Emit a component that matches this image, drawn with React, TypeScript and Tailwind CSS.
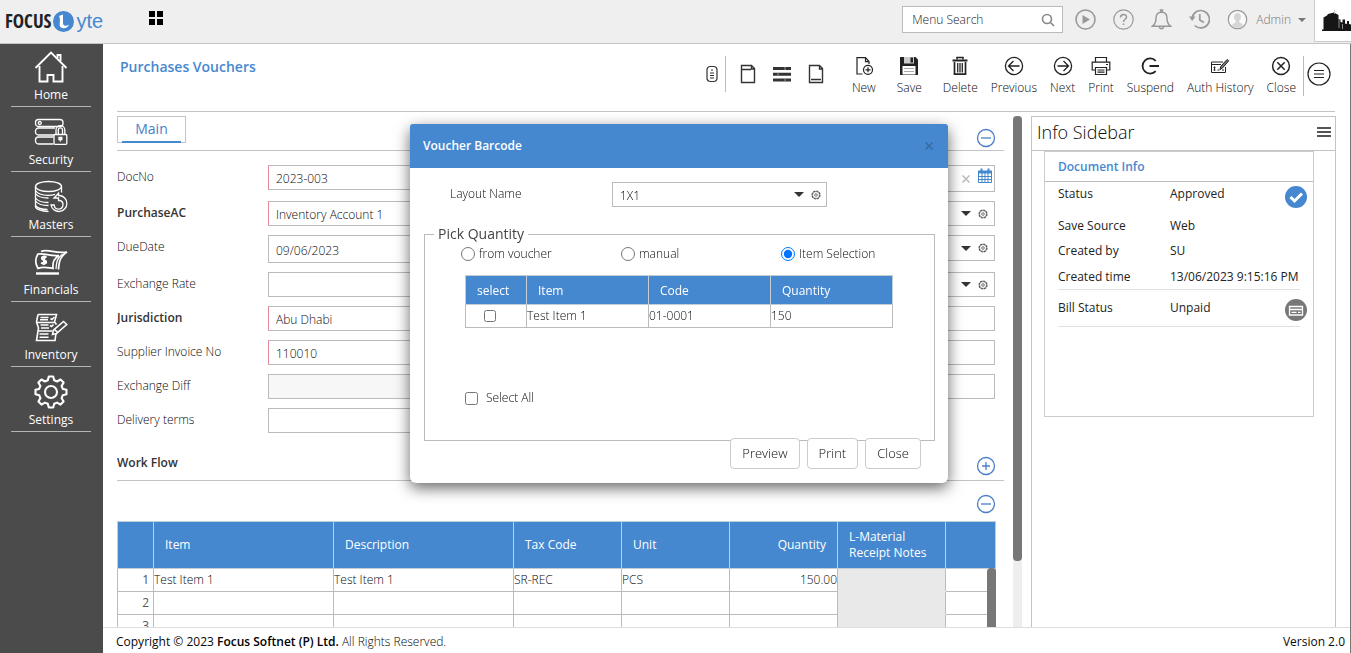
import React, { useState } from 'react';

type IconProps = { className?: string };

const HomeIcon = () => (
  <svg className="h-[34px] w-[34px]" viewBox="0 0 34 34" fill="none" stroke="currentColor" strokeWidth="1.900">
    <path d="M1.500 18 17 2.500 32.500 18" />
    <path d="M5.500 16v15.500h8V25h6v6.500h9V16M23.500 8V5h3v6" />
  </svg>
);

const SecurityIcon = () => (
  <svg className="h-[34px] w-[34px]" viewBox="0 0 34 34" fill="none" stroke="currentColor" strokeWidth="1.300">
    <rect x="1.500" y="4.500" width="27.500" height="7" rx="3" />
    <path d="M20 20H4.500a3 3 0 0 1-3-3v-1a3 3 0 0 1 3-3H21M19.500 29H4.500a3 3 0 0 1-3-3v-1a3 3 0 0 1 3-3h15" />
    <circle cx="5.800" cy="8" r="1.500" />
    <rect x="20" y="19.500" width="12.800" height="9.800" rx="1" />
    <path d="M22 19v-4a4.400 4.400 0 0 1 8.800 0v4M24.300 19v-4a2.100 2.100 0 0 1 4.200 0v4" />
    <path d="M26.400 22.500v4M25 22.500h2.800v2H25z" />
  </svg>
);

const MastersIcon = () => (
  <svg className="h-[34px] w-[34px]" viewBox="0 0 34 34" fill="none" stroke="currentColor" strokeWidth="1.300">
    <ellipse cx="14.500" cy="6.500" rx="13" ry="5" />
    <path d="M1.500 6.500v20c0 2.600 6 5 13 5M27.500 6.500v6" />
    <path d="M1.500 10.500c2 3.400 6.500 4.800 12.500 4.800 3 0 5-.3 7-1M1.500 13.500c2 3.400 6 4.500 13 4.500M1.500 18c2 3 7 4.500 13 4.500M1.500 21c2 3 7 4.500 13 4.500M1.500 25.500c2 2.800 6 4 12 4" />
    <path d="M20 18h4.500v2.500h1.300a4.400 4.400 0 1 1-5.600 4.500H17a8 8 0 1 0 8.500-9.500h-1v-2.300z" />
  </svg>
);

const FinancialsIcon = () => (
  <svg className="h-[34px] w-[34px]" viewBox="0 0 34 34" fill="none" stroke="currentColor" strokeWidth="1.700">
    <path d="M7 6.500c7-3 14 2.500 26 .5-6 4-8 8-8.500 17.500" />
    <path d="M4 9c7-1 12 2.500 21 1.500-5 3-6.500 6-6 13-6-1-10-2.500-15 0C1 18.500 1 13.500 4 9z" />
    <path d="M29 9c-6 3.500-6.500 8-7 15" strokeWidth="1.300" />
    <path d="M2 28.500h23" strokeWidth="2.400" />
    <path d="M12.500 12.500c-2-1.700-5-.5-4.500 1.200.6 2 4.200 1 4.200 3.300 0 1.800-3.500 2.200-5 .5M10.500 10.500l-.8 9.500" strokeWidth="2" />
  </svg>
);

const InventoryIcon = () => (
  <svg className="h-[34px] w-[34px]" viewBox="0 0 34 34" fill="none" stroke="currentColor" strokeWidth="1.600">
    <path d="M4 4.500h18.500l-2 7.500 2 2.500M4 4.500 2.500 12l2 6-2 12.500H21l1-7.500" />
    <path d="M2.500 12.500h17.500M4.500 21h14" />
    <path d="M6.500 7.500h8M6 9.800h8M6.500 15h8M7 18h8M5.500 24h9M5.500 27.200h9" strokeWidth="1.400" />
    <path d="m16.500 8.500 1.500 1 2.500-2.500M16 15.500l1.500 1 2-2" />
    <path d="m18.500 24.500.9-4.300L29.500 11.500l3.200 3-10.200 9zM20.500 19.500l2.800 2.700" />
  </svg>
);

const SettingsIcon = () => (
  <svg className="h-[34px] w-[34px]" viewBox="0 0 34 34" fill="none" stroke="currentColor" strokeWidth="2.100" strokeLinejoin="round">
    <circle cx="17" cy="17" r="6" />
    <path d="M14.800 1.500h4.400l1 3.800 2.900 1.200 3.400-2 3.100 3.100-2 3.400 1.200 2.900 3.700.9v4.400l-3.700 1-1.200 2.900 2 3.400-3.100 3.100-3.400-2-2.900 1.200-1 3.700h-4.400l-1-3.700-2.900-1.200-3.400 2-3.100-3.100 2-3.400-1.200-2.900-3.700-1v-4.400l3.700-.9L6.400 11l-2-3.400 3.100-3.100 3.400 2 2.900-1.200z" />
  </svg>
);

const GearIcon = () => (
  <svg className="h-[10px] w-[10px]" viewBox="0 0 10 10" fill="none" stroke="#555">
    <circle cx="5" cy="5" r="4" strokeWidth="1.200" strokeDasharray="2.200 .9" />
    <circle cx="5" cy="5" r="3.500" strokeWidth=".6" />
    <circle cx="5" cy="5" r="1.300" strokeWidth=".8" />
  </svg>
);

const Caret = ({ className = '' }: IconProps) => (
  <svg className={className || 'h-[5px] w-[10px]'} viewBox="0 0 10 5">
    <path d="M0 0h10L5 5z" fill="currentColor" />
  </svg>
);

const CircleIcon = ({ plus = false }: { plus?: boolean }) => (
  <svg className="h-5 w-5" viewBox="0 0 20 20" fill="none" stroke="#4a7fc8" strokeWidth="1.300">
    <circle cx="10" cy="10" r="8.500" />
    {plus ? <path d="M6 10h8M10 6v8" /> : <path d="M5 10h10" />}
  </svg>
);

const NewIcon = () => (
  <svg className="h-5 w-5" viewBox="0 0 20 20" fill="none" stroke="currentColor" strokeWidth="1.200">
    <path d="M8.500 18H3V1.700h8.500L15 5.500V8M11.500 1.700v4H15" />
    <circle cx="14" cy="13.800" r="4.500" />
    <path d="M11.500 13.800h5M14 11.300v5" />
  </svg>
);

const SaveIcon = () => (
  <svg className="h-5 w-5" viewBox="0 0 20 20">
    <path d="M1 1h15.500L19 3.500V19H1z" fill="currentColor" />
    <path d="M5 1h10v6.500H5z" fill="#ccc" />
    <path d="M11.500 1.500H14v5h-2.500z" fill="currentColor" />
    <path d="M3.500 10h13v8.500h-13z" fill="#fff" />
    <path d="M5 12.500h10M5 15.500h10" stroke="#aaa" />
  </svg>
);

const TrashIcon = () => (
  <svg className="h-5 w-5" viewBox="0 0 20 20" fill="none" stroke="currentColor">
    <path d="M2.500 4.500h15" strokeWidth="2" />
    <path d="M7 3.500V1.600h6v1.900" strokeWidth="1.500" />
    <path d="M4.500 6v12.200h11V6" strokeWidth="1.700" />
    <path d="M7.700 7v9.500M10 7v9.500M12.300 7v9.500" strokeWidth="1.300" />
  </svg>
);

const PreviousIcon = () => (
  <svg className="h-5 w-5" viewBox="0 0 20 20" fill="none" stroke="currentColor" strokeWidth="1.300">
    <circle cx="10" cy="10" r="8.600" />
    <path d="M15.500 10h-11M9.500 5 4.500 10l5 5" />
  </svg>
);

const NextIcon = () => (
  <svg className="h-5 w-5" viewBox="0 0 20 20" fill="none" stroke="currentColor" strokeWidth="1.300">
    <circle cx="10" cy="10" r="8.600" />
    <path d="M4.500 10h11M10.500 5l5 5-5 5" />
  </svg>
);

const PrintIcon = () => (
  <svg className="h-5 w-5" viewBox="0 0 20 20" fill="none" stroke="currentColor" strokeWidth="1.200">
    <path d="M4.500 6V1.500h11V6M4.500 14H1.200V6.200h17.600V14h-3.300" />
    <path d="M4.500 11.500h11v7h-11zM6.500 14h7M6.500 16.200h7M15 8.500h2" />
  </svg>
);

const SuspendIcon = () => (
  <svg className="h-5 w-5" viewBox="0 0 20 20" fill="none" stroke="currentColor" strokeWidth="1.800">
    <path d="M15.700 4.800a7.600 7.600 0 1 0 0 10.400M9.500 10H19" />
  </svg>
);

const AuthIcon = () => (
  <svg className="h-5 w-5" viewBox="0 0 20 20" fill="none" stroke="currentColor" strokeWidth="1">
    <path d="M13 6H1.500v10.500h14V11M1.500 8.500H11" />
    <path d="M4.500 10.500v4M3.500 11.500h2M3.500 14h2M7.500 14h2M12 14h2" />
    <path d="m10 13.500.7-3 6.300-7 1.700 1.300-6.200 7.200z" fill="#777" />
  </svg>
);

const CloseIcon = () => (
  <svg className="h-5 w-5" viewBox="0 0 20 20" fill="none" stroke="currentColor" strokeWidth="1.500">
    <circle cx="10" cy="10" r="8.400" />
    <path d="m6.300 6.300 7.400 7.400M13.700 6.300l-7.400 7.400" />
  </svg>
);

const CrossIcon = ({ className = '' }: IconProps) => (
  <svg className={`h-2 w-2 ${className}`} viewBox="0 0 8 8" stroke="currentColor" strokeWidth="1.500">
    <path d="m.5.500 7 7M7.500.500l-7 7" />
  </svg>
);

const CalendarIcon = () => (
  <svg className="h-4 w-[14px]" viewBox="0 0 14 16">
    <path d="M.5 3.500h13v11H.5z" fill="#fff" stroke="#4688cf" />
    <path d="M0 2.500h14v3H0z" fill="#4688cf" />
    <path d="M3.500.500V4M10.500.500V4" stroke="#4688cf" strokeWidth="2" />
    <path d="M4 5v9.500M7 5v9.500M10 5v9.500M.5 8.500h13M.5 11.500h13" stroke="#4688cf" />
  </svg>
);

const menuItems = [
  { label: 'Home', icon: HomeIcon },
  { label: 'Security', icon: SecurityIcon },
  { label: 'Masters', icon: MastersIcon },
  { label: 'Financials', icon: FinancialsIcon },
  { label: 'Inventory', icon: InventoryIcon },
  { label: 'Settings', icon: SettingsIcon }
];

const actions = [
  { label: 'New', icon: NewIcon, gap: 'mr-[21px]' },
  { label: 'Save', icon: SaveIcon, gap: 'mr-[21px]' },
  { label: 'Delete', icon: TrashIcon, gap: 'mr-[13px]' },
  { label: 'Previous', icon: PreviousIcon, gap: 'mr-[13px]' },
  { label: 'Next', icon: NextIcon, gap: 'mr-[13px]' },
  { label: 'Print', icon: PrintIcon, gap: 'mr-[13px]' },
  { label: 'Suspend', icon: SuspendIcon, gap: 'mr-[13px]' },
  { label: 'Auth History', icon: AuthIcon, gap: 'mr-[13px]' },
  { label: 'Close', icon: CloseIcon, gap: 'mr-[7px]' }
];

const fields = [
  { id: 'docNo', label: 'DocNo', value: '2023-003', row: 'h-[27px]', box: 'h-[25px] border-l-[#e58a9a]' },
  { id: 'purchaseAc', label: 'PurchaseAC', value: 'Inventory Account 1', bold: true, row: 'h-[25px]', box: 'h-[25px] border-l-[#e58a9a]' },
  { id: 'dueDate', label: 'DueDate', value: '09/06/2023', row: 'h-[28px]', box: 'h-[28px]' },
  { id: 'exchangeRate', label: 'Exchange Rate', value: '', row: 'h-[25px]', box: 'h-[25px]' },
  { id: 'jurisdiction', label: 'Jurisdiction', value: 'Abu Dhabi', bold: true, row: 'h-[25px]', box: 'h-[25px] border-l-[#e58a9a]' },
  { id: 'supplierInvoice', label: 'Supplier Invoice No', value: '110010', row: 'h-[25px]', box: 'h-[25px] border-l-[#e58a9a]' },
  { id: 'exchangeDiff', label: 'Exchange Diff', value: '', row: 'h-[25px]', box: 'h-[25px] bg-[#f7f7f7]' },
  { id: 'deliveryTerms', label: 'Delivery terms', value: '', row: 'h-[25px]', box: 'h-[25px]' }
];

const rightFields = [
  { id: 'date', kind: 'date', row: 'h-[27px]', box: 'h-[27px] pr-[2px]' },
  { id: 'currency', kind: 'select', row: 'h-[25px]', box: 'h-[25px] pr-[6px]' },
  { id: 'branch', kind: 'select', row: 'h-[28px]', box: 'h-[26px] pr-[6px]' },
  { id: 'place', kind: 'select', row: 'h-[25px]', box: 'h-[25px] pr-[6px]' },
  { id: 'narration', kind: 'text', row: 'h-[25px]', box: 'h-[25px]' },
  { id: 'reference', kind: 'text', row: 'h-[25px]', box: 'h-[25px]' },
  { id: 'remarks', kind: 'text', row: 'h-[25px]', box: 'h-[25px]' }
];

const rows = [
  { no: 1, item: 'Test Item 1', description: 'Test Item 1', tax: 'SR-REC', unit: 'PCS', quantity: '150.00' },
  { no: 2, item: '', description: '', tax: '', unit: '', quantity: '' },
  { no: 3, item: '', description: '', tax: '', unit: '', quantity: '' }
];

const docInfo = [
  { label: 'Status', value: 'Approved', style: 'h-8 leading-6', badge: 'approved' },
  { label: 'Save Source', value: 'Web', style: 'h-[25px] leading-6' },
  { label: 'Created by', value: 'SU', style: 'h-[26px] leading-6' },
  { label: 'Created time', value: '13/06/2023 9:15:16 PM', style: 'h-[25px] leading-6 border-b border-[#e2e2e2]' },
  { label: 'Bill Status', value: 'Unpaid', style: 'h-[37px] leading-9 border-b border-[#e2e2e2]', badge: 'bill' }
];

const pickOptions = ['from voucher', 'manual', 'Item Selection'];

function Header() {
  return (
    <header className="flex h-11 shrink-0 items-start border-b border-[#c4c4c4] bg-[#efefef]">
      <div className="flex h-[42px] w-[104px] items-center pl-[5px]">
        <span className="font-['Liberation_Sans_Narrow','Open_Sans_Condensed','DejaVu_Sans_Condensed',sans-serif] text-[19px] font-bold text-[#222]">FOCUS</span>
        <svg className="mr-[2px] ml-[2px] h-[21px] w-[21px] shrink-0" viewBox="0 0 21 21">
          <circle cx="10.500" cy="10.500" r="10.500" fill="#4688cf" />
          <path d="M6 5 10 3.500V12c0 3 3 3.500 6 1.500-1 4-6.500 5-9 2C6 13.500 8 8 6 5z" fill="#fff" />
        </svg>
        <span className="font-['Liberation_Sans',sans-serif] text-[20px] leading-5 font-normal text-[#4688cf]">yte</span>
      </div>
      <button aria-label="Dashboard" className="mt-[11px] ml-[45px] grid grid-cols-2 gap-[2px]">
        {[0, 1, 2, 3].map(n => <span key={n} className="h-[6px] w-[6px] bg-black" />)}
      </button>

      <div className="ml-auto flex items-start">
        <div className="mt-[6px] flex h-[27px] w-[161px] items-center border border-[#bbb] bg-white pr-[7px] pl-[9px]">
          <input aria-label="Menu Search" placeholder="Menu Search" className="w-full min-w-0 text-[12px] outline-none placeholder:text-[#222]" />
          <svg className="h-[14px] w-[14px] shrink-0" viewBox="0 0 14 14" fill="none" stroke="#888" strokeWidth="1.600">
            <circle cx="6" cy="6" r="4.500" />
            <path d="m9.500 9.500 3.500 3.500" />
          </svg>
        </div>
        <div className="mt-[9px] ml-3 flex items-center gap-[17px] text-[#999]">
          <svg className="h-[21px] w-[21px]" viewBox="0 0 21 21" fill="none" stroke="currentColor" strokeWidth="1.600">
            <circle cx="10.500" cy="10.500" r="9.500" />
            <path d="M7.500 6v9l7.500-4.500z" fill="currentColor" stroke="none" />
          </svg>
          <svg className="h-[21px] w-[21px]" viewBox="0 0 21 21" fill="none" stroke="currentColor" strokeWidth="1.200">
            <circle cx="10.500" cy="10.500" r="9.700" />
            <path d="M7.500 8.500c0-4 6-4 6-.5 0 2.300-3 2.300-3 5M10.500 14.500v1.500" strokeWidth="1.500" />
          </svg>
          <svg className="h-[21px] w-[21px]" viewBox="0 0 21 21" fill="none" stroke="currentColor" strokeWidth="1.500">
            <path d="M1.500 17.200c2.500-2 3.500-4 3.500-8 0-3.500 2-6 5.500-6s5.500 2.500 5.500 6c0 4 1 6 3.500 8zM8.500 17.500c0 3 4 3 4 0M9.500 3V1h2v2" />
          </svg>
          <svg className="h-[21px] w-[21px]" viewBox="0 0 21 21" fill="none" stroke="currentColor" strokeWidth="1.700">
            <path d="M3.200 8.500a8.700 8.700 0 1 1 2.500 8M10.800 5v6l4 2.500" />
            <path d="M0 7.500h6.500L3.200 12z" fill="currentColor" stroke="none" />
          </svg>
          <svg className="h-[21px] w-[21px]" viewBox="0 0 21 21">
            <circle cx="10.500" cy="10.500" r="9.200" fill="#fafafa" stroke="#999" strokeWidth="1.200" />
            <path d="M10.500 4c4.300 0 4.300 6 1.800 7.800v1.700l3.700 1.700-2 3.300h-7l-2-3.300 3.700-1.700v-1.700C6.200 10 6.200 4 10.500 4z" fill="#d5d5d5" />
          </svg>
        </div>
        <button className="mt-[9px] ml-2 flex items-center gap-[7px] text-[12px] leading-[22px] text-[#777]">
          Admin
          <Caret className="h-1 w-2" />
        </button>
        <div className="ml-2 flex h-[42px] w-[37px] items-center border-b border-l border-[#ccc] bg-white pl-[7px]">
          <svg className="h-[22px] w-[29px]" viewBox="0 0 29 22">
            <path d="M0 21v-1.500h1.500V7.500L5 5.500l1-1.500 6-1.500 4.500 2.500v4l2 .5V12l2 .5v-3h2.500v4l2 .5v-3h2v3l2 .5v5h2V21z" fill="#161616" />
            <path d="M12.500 0v4" stroke="#bbb" strokeWidth=".8" />
            <path d="M17 9v9M20.500 14v5" stroke="#fff" strokeWidth=".5" />
          </svg>
        </div>
      </div>
    </header>
  );
}

function Toolbar() {
  return (
    <div className="mr-[15px] ml-[14px] flex h-[68px] shrink-0 items-start border-b border-[#c4c4c4] text-[#222]">
      <h1 className="mt-[13px] ml-[3px] text-[14px] leading-5 font-semibold text-[#4688cf]">Purchases Vouchers</h1>
      <div className="mt-3 ml-auto flex h-9 items-center text-[#333]">
        <svg className="h-5 w-3" viewBox="0 0 12 20" fill="none" stroke="currentColor" strokeWidth="1.200">
          <rect x="1" y="2.500" width="10" height="15" rx="3.500" />
          <path d="M5 6h2M4 9h4M4 11.500h4M4 14h4" />
        </svg>
        <span className="ml-[7px] h-full w-px bg-[#bbb]" />
        <div className="flex items-center gap-[14px] pl-3">
          <svg className="h-5 w-5" viewBox="0 0 20 20" fill="none" stroke="currentColor" strokeWidth="1.400">
            <path d="M3.500 1.500h10l3 3v14h-13zM3.500 5.500h9.500M13.500 1.500v3.500h3" />
          </svg>
          <svg className="h-5 w-5" viewBox="0 0 20 20" fill="none" stroke="currentColor" strokeWidth="3">
            <path d="M1 4.500h18M1 10.300h18M1 16h18" />
            <path d="M13 3v3M6 8.800v3M13 14.500v3" stroke="#999" strokeWidth="1" />
          </svg>
          <svg className="h-5 w-5" viewBox="0 0 20 20" fill="none" stroke="currentColor" strokeWidth="1.400">
            <path d="M3.500 1.500h10l3 3v14h-13zM5 15.500h10M13.500 1.500v3.500h3" />
          </svg>
        </div>
      </div>
      <div className="mt-3 ml-[26px] flex text-[12px] leading-4">
        {actions.map(({ label, icon: Icon, gap }) => (
          <button key={label} className={`flex flex-col items-center gap-1 ${gap}`}>
            <Icon />
            <span className="text-[#0a0a0a]">{label}</span>
          </button>
        ))}
      </div>
      <div className="mt-3 mr-1 flex h-10 items-start border-l border-[#bbb] pt-[6px] pl-[3px]">
        <button aria-label="More">
          <svg className="h-6 w-6" viewBox="0 0 24 24" fill="none" stroke="currentColor" strokeWidth="1.200">
            <circle cx="12" cy="12" r="11" />
            <path d="M7 8.500h10M7 12h10M7 15.500h10" />
          </svg>
        </button>
      </div>
    </div>
  );
}

function VoucherForm() {
  return (
    <section className="flex min-w-0 flex-1 flex-col overflow-hidden pt-1">
      <div className="flex h-[35px] shrink-0 items-start justify-between border-b border-[#c4c4c4] pr-2">
        <button className="h-[27px] w-[69px] border border-[#c4c4c4] px-1 text-[14px] leading-6 font-normal text-[#4a7fc8]">
          <span className="block border-b-2 border-[#4688cf]">Main</span>
        </button>
        <button aria-label="Collapse" className="mt-3"><CircleIcon /></button>
      </div>

      <div className="mt-[14px] mr-[9px] flex gap-9">
        <div className="flex flex-1 flex-col gap-[9px]">
          {fields.map(f => (
            <div key={f.id} className={`flex items-start ${f.row}`}>
              <label htmlFor={f.id} className={`w-[151px] shrink-0 leading-6 ${f.bold ? 'font-semibold text-[#333]' : ''}`}>{f.label}</label>
              <input id={f.id} defaultValue={f.value} className={`w-full min-w-0 border border-[#bbb] pt-[2px] pl-[7px] outline-none ${f.box}`} />
            </div>
          ))}
        </div>
        <div className="flex flex-1 flex-col gap-[9px]">
          {rightFields.map(f => (
            <div key={f.id} className={`pl-[151px] ${f.row}`}>
              <div className={`flex w-full items-center border border-[#bbb] ${f.box}`}>
                {f.kind === 'select' ? (
                  <select aria-label={f.id} className="h-full min-w-0 flex-1 appearance-none outline-none"><option></option></select>
                ) : (
                  <input aria-label={f.id} className="h-full min-w-0 flex-1 outline-none" />
                )}
                {f.kind === 'select' && (
                  <span className="flex items-center gap-[7px] text-[#333]">
                    <Caret />
                    <GearIcon />
                  </span>
                )}
                {f.kind === 'date' && (
                  <span className="flex h-full gap-2 pt-[2px]">
                    <CrossIcon className="mt-[7px] text-[#bbb]" />
                    <CalendarIcon />
                  </span>
                )}
              </div>
            </div>
          ))}
        </div>
      </div>

      <div className="mt-[18px] flex h-[30px] shrink-0 items-start justify-between border-b border-[#c4c4c4] pr-2">
        <h2 className="leading-6 font-semibold text-[#333]">Work Flow</h2>
        <button aria-label="Expand" className="mt-[5px]"><CircleIcon plus /></button>
      </div>
      <div className="flex h-10 shrink-0 justify-end pt-[13px] pr-2">
        <button aria-label="Collapse items" className="h-5"><CircleIcon /></button>
      </div>

      <div className="relative mr-2">
        <table className="w-full table-fixed border-collapse">
          <colgroup>
            <col className="w-9" />
            <col />
            <col />
            <col className="w-[108px]" />
            <col className="w-[108px]" />
            <col className="w-[108px]" />
            <col className="w-[108px]" />
            <col className="w-[50px]" />
          </colgroup>
          <thead>
            <tr className="h-[47px] bg-[#4688cf] text-left leading-4 text-white [&>th]:border [&>th]:border-[#c4ccd4] [&>th]:px-[11px] [&>th]:font-normal">
              <th></th>
              <th>Item</th>
              <th>Description</th>
              <th>Tax Code</th>
              <th>Unit</th>
              <th className="text-right">Quantity</th>
              <th>L-Material Receipt Notes</th>
              <th></th>
            </tr>
          </thead>
          <tbody>
            {rows.map(r => (
              <tr key={r.no} className="h-[23px] leading-4 [&>td]:border [&>td]:border-[#bbb]">
                <td className="pr-1 text-right font-normal text-[#555]">{r.no}</td>
                <td>{r.item}</td>
                <td>{r.description}</td>
                <td>{r.tax}</td>
                <td>{r.unit}</td>
                <td className="text-right">{r.quantity}</td>
                <td className="border-y-[#e9e9e9]! bg-[#e9e9e9]"></td>
                <td></td>
              </tr>
            ))}
          </tbody>
        </table>
        <div className="absolute top-[47px] right-0 bottom-0 w-[9px] rounded-t bg-[#777]" />
      </div>
    </section>
  );
}

function InfoSidebar() {
  return (
    <aside className="mt-1 ml-[9px] w-[305px] shrink-0 border border-b-0 border-[#c4c4c4]">
      <div className="flex h-[34px] items-start justify-between border-b border-[#c4c4c4] pt-[3px] pr-1 pl-[5px]">
        <h2 className="text-[18px] leading-6">Info Sidebar</h2>
        <button aria-label="Sidebar menu" className="mt-[7px] flex w-[14px] flex-col gap-[2px]">
          <span className="h-[2px] bg-[#555]" />
          <span className="h-[2px] bg-[#555]" />
          <span className="h-[2px] bg-[#555]" />
        </button>
      </div>
      <div className="mr-[21px] ml-3 h-[266px] border border-[#ccc] text-[#222]">
        <h3 className="h-[30px] border-b border-[#bbb] pl-[13px] leading-[30px] font-semibold text-[#4688cf]">Document Info</h3>
        <dl className="mr-[13px] ml-[13px] font-normal">
          {docInfo.map(d => (
            <div key={d.label} className={`relative flex ${d.style}`}>
              <dt className="w-28 shrink-0">{d.label}</dt>
              <dd className="whitespace-nowrap">{d.value}</dd>
              {d.badge === 'approved' && (
                <svg className="absolute top-1 -right-[7px] h-[22px] w-[22px]" viewBox="0 0 22 22">
                  <circle cx="11" cy="11" r="11" fill="#4688cf" />
                  <path d="m5.500 11 4 4 7.500-7.500" fill="none" stroke="#fff" strokeWidth="3" />
                </svg>
              )}
              {d.badge === 'bill' && (
                <svg className="absolute top-[9px] -right-[7px] h-[22px] w-[22px]" viewBox="0 0 22 22">
                  <circle cx="11" cy="11" r="11" fill="#777" />
                  <path d="M4.500 7.500h13v8.500h-13zM4.500 10.500h13M6.500 13.300h5M13 13.300h2.500" fill="none" stroke="#fff" strokeWidth="1.300" />
                </svg>
              )}
            </div>
          ))}
        </dl>
      </div>
    </aside>
  );
}

function BarcodeDialog() {
  const [pick, setPick] = useState('Item Selection');

  return (
    <div className="pointer-events-none fixed inset-0 flex items-start justify-center pt-[124px] pl-[7px]">
      <div role="dialog" aria-label="Voucher Barcode" className="pointer-events-auto w-[538px] rounded-md bg-white pb-[14px] shadow-[0_5px_15px_rgba(0,0,0,0.6)]">
        <div className="flex h-11 items-center justify-between rounded-t-[3px] bg-[#4688cf] pr-[15px] pl-[13px]">
          <h2 className="font-semibold text-white">Voucher Barcode</h2>
          <button aria-label="Dismiss" className="text-[#366aa3]"><CrossIcon /></button>
        </div>

        <div className="mt-[14px] flex pl-10">
          <label htmlFor="layout" className="w-[162px] leading-6">Layout Name</label>
          <div className="relative h-[25px] w-[215px]">
            <select id="layout" className="h-full w-full appearance-none border border-[#bbb] pt-[2px] pl-[7px] outline-none">
              <option>1X1</option>
            </select>
            <span className="pointer-events-none absolute inset-y-0 right-[6px] flex items-center gap-[7px] text-[#333]">
              <Caret />
              <GearIcon />
            </span>
          </div>
        </div>

        <fieldset className="mr-[13px] ml-[14px] mt-[17px] h-[217px] min-w-0 border border-[#bbb] pl-10">
          <legend className="-ml-[31px] px-1 text-[14px] leading-5 font-normal text-[#444]">Pick Quantity</legend>
          <div className="-ml-1 flex leading-5">
            {pickOptions.map(option => (
              <label key={option} className="flex w-40 shrink-0 items-center gap-1 last:w-auto">
                <input type="radio" name="pick" checked={pick === option} onChange={() => setPick(option)} className="h-[14px] w-[14px]" />
                {option}
              </label>
            ))}
          </div>

          <table className="mt-[11px] w-[428px] table-fixed border-collapse">
            <thead>
              <tr className="h-[29px] bg-[#4688cf] text-left text-white [&>th]:border [&>th]:border-[#c4ccd4] [&>th]:px-[11px] [&>th]:pt-[2px] [&>th]:font-normal">
                <th className="w-[61px]">select</th>
                <th>Item</th>
                <th>Code</th>
                <th>Quantity</th>
              </tr>
            </thead>
            <tbody>
              <tr className="h-[23px] leading-4 [&>td]:border [&>td]:border-[#bbb]">
                <td className="pl-[18px]"><input type="checkbox" aria-label="Test Item 1" className="block h-3 w-3" /></td>
                <td>Test Item 1</td>
                <td>01-0001</td>
                <td>150</td>
              </tr>
            </tbody>
          </table>

          <label className="mt-[60px] flex items-center gap-2 leading-5">
            <input type="checkbox" className="h-[13px] w-[13px]" />
            Select All
          </label>
        </fieldset>

        <div className="relative -mt-[3px] flex justify-end gap-[7px] pr-[27px] text-[13px]">
          {['Preview', 'Print', 'Close'].map(name => (
            <button key={name} className="h-[31px] rounded border border-[#ccc] bg-white px-[11px]">{name}</button>
          ))}
        </div>
      </div>
    </div>
  );
}

export default function App() {
  return (
    <div className="flex h-screen flex-col overflow-hidden bg-white font-['Open_Sans',sans-serif] text-[12px] font-light text-[#0a0a0a]">
      <Header />
      <div className="flex min-h-0 flex-1">
        <nav className="w-[103px] shrink-0 bg-[#4b4b4b] px-[11px] font-normal text-white">
          {menuItems.map(({ label, icon: Icon }) => (
            <a key={label} href="#" className="flex h-[65px] w-20 flex-col items-center border-b border-[#b5b5b5] pt-2 first:h-[63px] first:pt-[6px]">
              <Icon />
              <span className="mt-px leading-5">{label}</span>
            </a>
          ))}
        </nav>

        <main className="flex min-w-0 flex-1 flex-col border-r border-[#777]">
          <Toolbar />
          <div className="mr-[14px] ml-[14px] flex min-h-0 flex-1">
            <VoucherForm />
            <div className="mt-1 ml-[9px] w-[9px] shrink-0 bg-[#eee]">
              <div className="h-[87%] rounded bg-[#777]" />
            </div>
            <InfoSidebar />
          </div>
          <footer className="flex h-[26px] shrink-0 items-center justify-between border-t border-[#ddd] bg-white pt-[2px] pr-[5px] pl-[13px]">
            <p>
              <span className="font-medium">Copyright © 2023 </span>
              <span className="font-semibold text-black">Focus Softnet (P) Ltd.</span> All Rights Reserved.
            </p>
            <span className="font-medium">Version 2.0</span>
          </footer>
        </main>
      </div>
      <BarcodeDialog />
    </div>
  );
}
